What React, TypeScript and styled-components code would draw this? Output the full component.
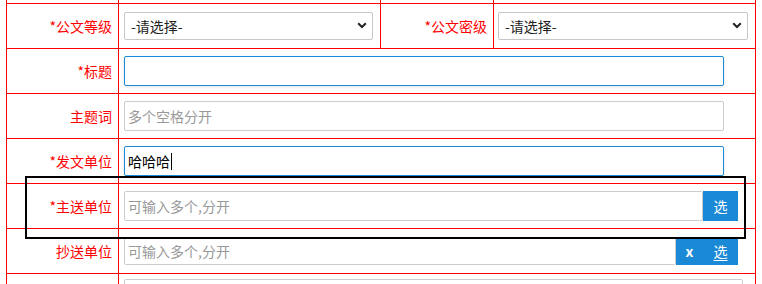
import React from "react";
import styled, { createGlobalStyle } from "styled-components";

const GlobalStyle = createGlobalStyle`
  html, body { margin: 0; padding: 0; background: #fff; overflow: hidden; }
  body { font-family: "Noto Sans CJK SC", "Noto Sans", sans-serif; font-size: 14px; }
  * { box-sizing: border-box; }
`;

const Page = styled.div`
  position: relative;
  width: 762px;
  height: 284px;
  overflow: hidden;
`;

const Grid = styled.div`
  margin: -42px 0 0 6px;
  display: grid;
  grid-template-columns: 111px 261px 112px 261px;
  grid-auto-rows: 44px;
  gap: 1px;
  padding: 1px;
  background: #ff0000;
  width: max-content;
`;

const Cell = styled.div<{ $span?: number }>`
  background: #fff;
  display: flex;
  align-items: center;
  grid-column: span ${(p) => p.$span ?? 1};
  min-width: 0;
`;

const Label = styled(Cell)`
  justify-content: flex-end;
  padding-right: 6px;
  color: #ff0000;
  white-space: nowrap;
  font-size: 14px;
`;

const Value = styled(Cell)<{ $pl?: number; $top?: number }>`
  padding-left: ${(p) => p.$pl ?? 5}px;
  ${(p) => (p.$top !== undefined ? `align-items: flex-start; padding-top: ${p.$top}px;` : "")}
`;

const SelectWrap = styled.div<{ $w: number }>`
  position: relative;
  width: ${(p) => p.$w}px;
  height: 28px;
`;

const Select = styled.select`
  appearance: none;
  -webkit-appearance: none;
  width: 100%;
  height: 100%;
  border: 1px solid #c6c6c6;
  border-radius: 2px;
  background: #fff;
  padding: 0 0 0 6px;
  font-family: inherit;
  font-size: 14px;
  color: #222;
  outline: none;
`;

const Chevron = styled.svg`
  position: absolute;
  right: 6px;
  top: 10px;
  width: 10px;
  height: 7px;
  pointer-events: none;
`;

const TextInput = styled.input<{ $w?: number; $h?: number; $blue?: boolean }>`
  width: ${(p) => (p.$w ? `${p.$w}px` : "auto")};
  flex: ${(p) => (p.$w ? "none" : "1")};
  min-width: 0;
  height: ${(p) => p.$h ?? 30}px;
  border: 1px solid ${(p) => (p.$blue ? "#1a89d6" : "#cccccc")};
  border-radius: 2px;
  padding: 0 3px;
  font-family: inherit;
  font-size: 14px;
  color: #000;
  background: #fff;
  outline: none;
  box-shadow: ${(p) => (p.$blue ? "0 1px 3px rgba(0,0,0,0.12)" : "none")};
  &::placeholder {
    color: #999;
  }
`;

const FakeInput = styled.div<{ $w: number }>`
  width: ${(p) => p.$w}px;
  height: 30px;
  border: 1px solid #1a89d6;
  border-radius: 2px;
  padding: 0 3px;
  display: flex;
  align-items: center;
  color: #000;
  font-size: 14px;
  box-shadow: 0 1px 3px rgba(0, 0, 0, 0.12);
`;

const Caret = styled.span`
  display: inline-block;
  width: 1px;
  height: 17px;
  background: #000;
  margin-left: 1px;
`;

const Group = styled.div<{ $h: number }>`
  width: 614px;
  height: ${(p) => p.$h}px;
  display: flex;
  align-items: stretch;
`;

const BlueBtn = styled.button<{ $w: number; $under?: boolean; $bold?: boolean }>`
  width: ${(p) => p.$w}px;
  flex: none;
  border: none;
  margin: 0;
  padding: 0;
  background: #1a89d6;
  color: #fff;
  font-family: inherit;
  font-size: 14px;
  font-weight: ${(p) => (p.$bold ? 700 : 400)};
  text-decoration: ${(p) => (p.$under ? "underline" : "none")};
  text-underline-offset: 3px;
  display: flex;
  align-items: center;
  justify-content: center;
`;

const Annotation = styled.div`
  position: absolute;
  left: 25px;
  top: 176px;
  width: 721px;
  height: 63px;
  border: 2px solid #000;
  pointer-events: none;
`;

const ChevronIcon = () => (
  <Chevron viewBox="0 0 10 7">
    <path d="M1.2 1.3 L5 5 L8.8 1.3" fill="none" stroke="#222" strokeWidth="2" />
  </Chevron>
);

export default function App() {
  return (
    <>
      <GlobalStyle />
      <Page>
        <Grid>
          <Label />
          <Value />
          <Label />
          <Value />

          <Label>*公文等级</Label>
          <Value>
            <SelectWrap $w={249}>
              <Select defaultValue="">
                <option value="">-请选择-</option>
              </Select>
              <ChevronIcon />
            </SelectWrap>
          </Value>
          <Label>*公文密级</Label>
          <Value $pl={4}>
            <SelectWrap $w={250}>
              <Select defaultValue="">
                <option value="">-请选择-</option>
              </Select>
              <ChevronIcon />
            </SelectWrap>
          </Value>

          <Label>*标题</Label>
          <Value $span={3}>
            <TextInput $w={600} $blue />
          </Value>

          <Label>主题词</Label>
          <Value $span={3}>
            <TextInput $w={600} placeholder="多个空格分开" />
          </Value>

          <Label>*发文单位</Label>
          <Value $span={3}>
            <FakeInput $w={600}>
              哈哈哈
              <Caret />
            </FakeInput>
          </Value>

          <Label>*主送单位</Label>
          <Value $span={3}>
            <Group $h={30}>
              <TextInput placeholder="可输入多个,分开" />
              <BlueBtn $w={35}>选</BlueBtn>
            </Group>
          </Value>

          <Label>抄送单位</Label>
          <Value $span={3}>
            <Group $h={28}>
              <TextInput $h={28} placeholder="可输入多个,分开" />
              <BlueBtn $w={27} $bold>x</BlueBtn>
              <BlueBtn $w={35} $under>选</BlueBtn>
            </Group>
          </Value>

          <Label />
          <Value $span={3} $top={5}>
            <TextInput $w={619} />
          </Value>
        </Grid>
        <Annotation />
      </Page>
    </>
  );
}
